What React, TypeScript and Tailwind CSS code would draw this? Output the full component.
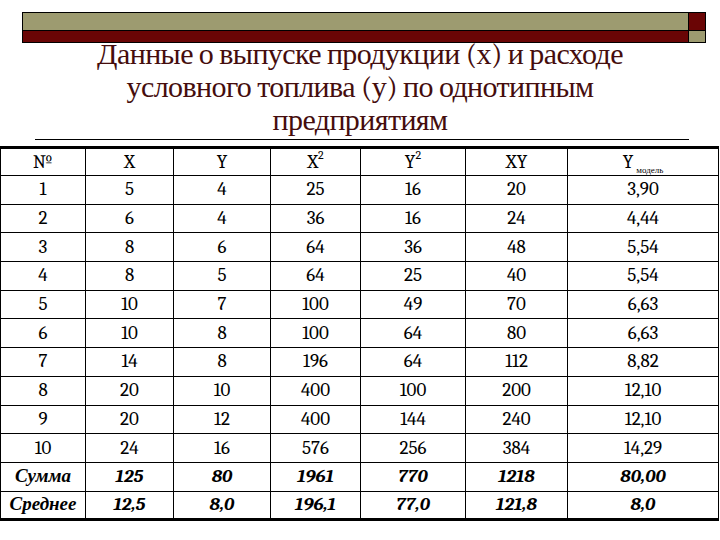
import React from 'react';

const rows = [
    ['1', '5', '4', '25', '16', '20', '3,90'],
    ['2', '6', '4', '36', '16', '24', '4,44'],
    ['3', '8', '6', '64', '36', '48', '5,54'],
    ['4', '8', '5', '64', '25', '40', '5,54'],
    ['5', '10', '7', '100', '49', '70', '6,63'],
    ['6', '10', '8', '100', '64', '80', '6,63'],
    ['7', '14', '8', '196', '64', '112', '8,82'],
    ['8', '20', '10', '400', '100', '200', '12,10'],
    ['9', '20', '12', '400', '144', '240', '12,10'],
    ['10', '24', '16', '576', '256', '384', '14,29'],
];

const totals = [
    ['Сумма', '125', '80', '1961', '770', '1218', '80,00'],
    ['Среднее', '12,5', '8,0', '196,1', '77,0', '121,8', '8,0'],
];

const widths = ['w-[85px]', 'w-[88px]', 'w-[97px]', 'w-[90px]', 'w-[105px]', 'w-[102px]', 'w-[151px]'];

const App: React.FC = () => {
    return (
        <div className="w-[720px] h-[540px] bg-white overflow-hidden font-serif [font-family:'Liberation_Serif','Times_New_Roman',serif] text-black">
            {/* top decorative bar */}
            <div className="pt-3 pl-[22px] flex">
                <div className="flex flex-col w-[666px] border border-black border-r-0">
                    <div className="h-[18px] bg-[#9d9b70] border-b border-black" />
                    <div className="h-[11px] bg-[#6a0505]" />
                </div>
                <div className="flex flex-col w-[18px] border border-black">
                    <div className="h-[18px] bg-[#6a0505] border-b border-black" />
                    <div className="h-[11px] bg-[#9d9b70]" />
                </div>
            </div>

            <h1 className="-mt-[5px] text-center text-[30px] leading-[33px] text-[#450d0d] tracking-[-0.6px]">
                Данные о выпуске продукции (х) и расходе
                <br />
                условного топлива (у) по однотипным
                <br />
                предприятиям
            </h1>
            <div className="mt-[2px] ml-[35px] w-[654px] border-t border-black" />

            <table className="mt-[6px] w-[718px] border-collapse text-[19px] leading-none table-fixed">
                <thead>
                    <tr className="h-[28px] border-t-[3px] border-black">
                        {['№', 'X', 'Y', 'X2', 'Y2', 'XY', 'Ym'].map((h, i) => (
                            <th key={i} className={`${widths[i]} border border-black font-normal text-center align-middle`}>
                                {h === 'X2' ? (
                                    <span>X<sup className="text-[12px] align-[3px]">2</sup></span>
                                ) : h === 'Y2' ? (
                                    <span>Y<sup className="text-[12px] align-[3px]">2</sup></span>
                                ) : h === 'Ym' ? (
                                    <span>Y<sub className="text-[9px] align-[-3px] ml-[3px]">модель</sub></span>
                                ) : (
                                    h
                                )}
                            </th>
                        ))}
                    </tr>
                </thead>
                <tbody>
                    {rows.map((r, ri) => (
                        <tr key={ri} className="h-[28.7px]">
                            {r.map((c, ci) => (
                                <td key={ci} className="border border-black text-center align-middle">
                                    {c}
                                </td>
                            ))}
                        </tr>
                    ))}
                    {totals.map((r, ri) => (
                        <tr key={ri} className={`h-[28.7px] ${ri === 1 ? 'border-b-[3px] border-black' : ''}`}>
                            {r.map((c, ci) => (
                                <td key={ci} className="border border-black text-center align-middle font-bold italic">
                                    {c}
                                </td>
                            ))}
                        </tr>
                    ))}
                </tbody>
            </table>
        </div>
    );
};

export default App;
